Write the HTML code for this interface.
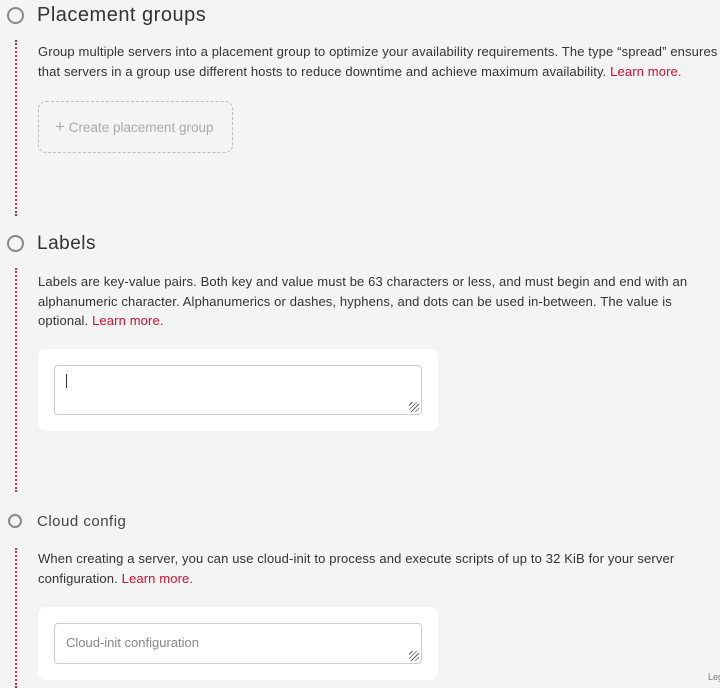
<!DOCTYPE html><html><head><style>
body{margin:0;width:720px;height:686px;background:#f4f4f4;font-family:"Liberation Sans",sans-serif;color:#333;position:relative;overflow:hidden}
.a{position:absolute}
.circ{position:absolute;width:14px;height:14px;border:2px solid #888;border-radius:50%;box-sizing:border-box}
.dot{position:absolute;left:15px;width:0;border-left:2px dotted #c4304a}
h2{position:absolute;margin:0;font-weight:400;color:#333;white-space:nowrap;letter-spacing:0.5px}
p{position:absolute;margin:0;font-size:13px;line-height:19.5px;color:#333;white-space:nowrap;letter-spacing:0.13px}
a{color:#d50c2d;text-decoration:none}
.card{position:absolute;background:#fff;border-radius:8px}
.ta{position:absolute;border:1px solid #ccc;border-radius:4px;background:#fff;box-sizing:border-box}
.grip{position:absolute;right:2px;bottom:2px;width:10px;height:10px;background:repeating-linear-gradient(135deg,transparent 0 2px,#666 2px 3px)}
</style></head><body>
<div class="circ" style="left:7px;top:7px;width:17px;height:17px"></div>
<h2 style="left:37px;top:4px;font-size:20px">Placement groups</h2>
<div class="dot" style="top:40px;height:176px"></div>
<p style="left:38px;top:42px">Group multiple servers into a placement group to optimize your availability requirements. The type “spread” ensures<br>that servers in a group use different hosts to reduce downtime and achieve maximum availability. <a>Learn more.</a></p>
<div class="a" style="left:38px;top:101px;width:195px;height:52px;border:1px dashed #bbb;border-radius:8px;box-sizing:border-box;color:#aaa;font-size:13.5px;line-height:50px;padding-left:16px"><span style="font-size:17px">+</span> Create placement group</div>
<div class="circ" style="left:7px;top:235px;width:17px;height:17px"></div>
<h2 style="left:37px;top:233px;font-size:19px">Labels</h2>
<div class="dot" style="top:268px;height:224px"></div>
<p style="left:38px;top:272px">Labels are key-value pairs. Both key and value must be 63 characters or less, and must begin and end with an<br>alphanumeric character. Alphanumerics or dashes, hyphens, and dots can be used in-between. The value is<br>optional. <a>Learn more.</a></p>
<div class="card" style="left:38px;top:349px;width:400px;height:82px"></div>
<div class="ta" style="left:54px;top:365px;width:368px;height:50px"><div class="a" style="left:11px;top:8px;width:1px;height:14px;background:#333"></div><div class="grip"></div></div>
<div class="circ" style="left:8px;top:514px;width:14px;height:14px"></div>
<h2 style="left:37px;top:513px;font-size:15px;color:#444">Cloud config</h2>
<div class="dot" style="top:548px;height:140px"></div>
<p style="left:38px;top:549px">When creating a server, you can use cloud-init to process and execute scripts of up to 32 KiB for your server<br>configuration. <a>Learn more.</a></p>
<div class="card" style="left:38px;top:607px;width:400px;height:73px"></div>
<div class="ta" style="left:54px;top:623px;width:368px;height:41px"><div class="a" style="left:11px;top:11px;font-size:13px;color:#888">Cloud-init configuration</div><div class="grip"></div></div>
<div class="a" style="left:708px;top:672px;font-size:9px;color:#777">Leg</div>
</body></html>
